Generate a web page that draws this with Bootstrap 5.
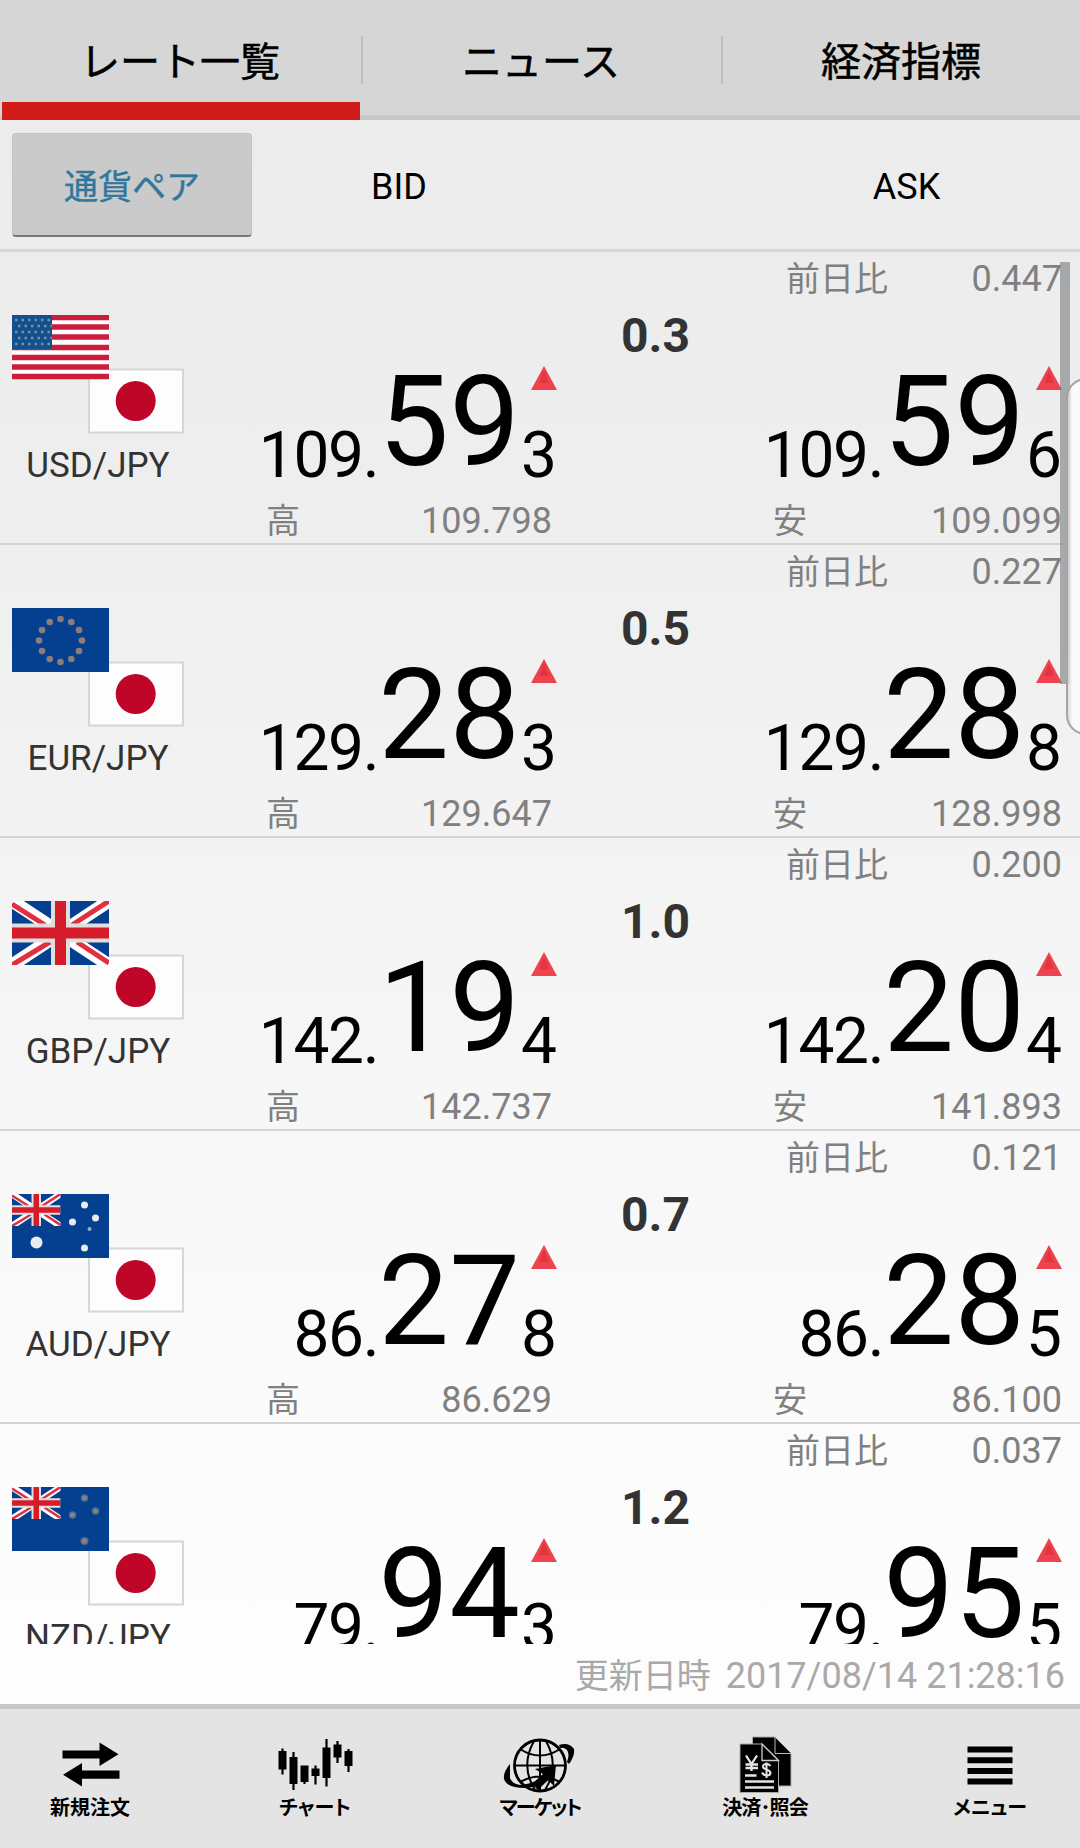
<!DOCTYPE html>
<html lang="ja">
<head>
<meta charset="utf-8">
<meta name="viewport" content="width=device-width, initial-scale=1">
<title>レート一覧</title>
<link rel="stylesheet" href="https://cdn.jsdelivr.net/npm/bootstrap@5.3.0/dist/css/bootstrap.min.css">
<style>
body{font-family:Roboto,"Noto Sans CJK JP",sans-serif;color:#000;width:1080px;height:1848px;overflow:hidden;background:linear-gradient(#ececec 120px,#eeeeee 480px,#f5f5f5 980px,#fcfcfc 1500px,#fdfdfd 1644px)}
.top-tabs{height:120px;background:#d6d6d6;border-bottom:5px solid #c8c8c8}
.top-tabs .nav-link{height:120px;padding:0;font-size:40px;line-height:126px;color:#000;text-align:center;position:relative;-webkit-text-stroke:.5px #000}
.top-tabs .nav-link.active::after{content:"";position:absolute;left:2px;right:0;top:102px;height:18px;background:#d21c1a}
.top-tabs .nav-item+.nav-item{padding-left:2px}
.top-tabs .nav-item+.nav-item::before{content:"";position:absolute;left:1px;top:36px;width:2px;height:48px;background:#bdbdbd}
.col-heads{height:132px;border-bottom:3px solid #d5d5d5;padding:13px 0 0 12px;font-size:36px;line-height:108px}
.pair-btn{width:240px;height:104px;padding:0;font-size:34px;line-height:106px;color:#32769a;background:#cacaca;border:1px solid #c2c2c2;border-bottom:2px solid #787878;border-radius:4px;-webkit-text-stroke:.4px #32769a}
.head-bid{width:294px}.head-ask{width:311px;margin-left:205px}
.rate-list{height:1392px;overflow:hidden}
.rate-row{height:293px;border-bottom:2px solid #d4d4d4}
.pair-col{width:249px;padding-top:63px}
.pair-col svg{margin-left:12px;display:block}
.pair-name{width:196px;font-size:35px;line-height:42px;margin-top:11px;color:#333}
.quote-col{width:308px}
.day-diff{height:105px;padding:6px 0 0 32px}
.sub-line{font-size:36px;line-height:42px;color:#808080}
.sub-line .jp{font-size:34px}
.price-line{height:128px}
.p-small{font-size:64px;line-height:66px;margin-bottom:-4px;letter-spacing:-1.3px}
.p-big{font-size:126px;line-height:128px;margin-bottom:-1px}
.p-last{width:37px;padding-top:9px}
.p-last .p-small{letter-spacing:0}
.high-low{margin-top:15px;padding:0 5px 0 17px}
.ask .high-low{padding:0 0 0 19px}
.spread{width:197px;padding-top:56px;font-size:48px;line-height:56px;font-weight:700;color:#333}
.updated{height:60px;padding:2px 15px 0 0;font-size:36px;line-height:58px;color:#a9a9a9;background:#fdfdfd}
.updated .jp{font-size:34px;margin-right:15px}
.updated span{position:relative;top:1px}
.bottom-bar{height:144px;border-top:5px solid #c8c8c8;background:#e4e4e4}
.bar-item{width:180px;padding-top:23px;color:#000}
.bar-item svg{display:block;margin:0 auto}
.bar-item span{font-family:"Noto Sans CJK JP",sans-serif;font-size:20px;line-height:26px;font-weight:700;display:block;white-space:nowrap;font-feature-settings:"palt"}
.bar-item .tight{letter-spacing:-1.9px}
.bar-item .snug{letter-spacing:-.9px}
.scroll-thumb{position:absolute;left:1060px;top:262px;width:10px;height:422px;background:rgba(120,122,124,.6)}
.edge-panel{position:absolute;left:1066px;top:378px;width:40px;height:357px;border:2px solid #a4a4a4;border-radius:22px;background:linear-gradient(90deg,rgba(225,225,225,.8) 0 2px,#fafafa 4px)}
</style>
<script src="https://cdn.jsdelivr.net/npm/bootstrap@5.3.0/dist/js/bootstrap.bundle.min.js"></script>
</head>
<body class="position-relative">
<svg width="0" height="0" class="position-absolute">
  <defs>
    <g id="jp"><rect x="77" y="54.500" width="94" height="63" fill="#fdfdfd" stroke="#d6d6d6" stroke-width="2"/><circle cx="123.7" cy="86" r="20" fill="#bf0628"/></g>
    <g id="jack">
      <rect width="97" height="64" fill="#04408f"/>
      <path d="M0 0 97 64M97 0 0 64" stroke="#fff" stroke-width="13"/>
      <path d="M0 3 33 24M97 0 60 24M0 64 38 41M97 62 65 41" stroke="#e03040" stroke-width="5"/>
      <path d="M48.500 0V64M0 32H97" stroke="#e2dede" stroke-width="19"/>
      <path d="M48.500 0V64M0 32H97" stroke="#d41c2a" stroke-width="11"/>
    </g>
    <symbol id="up" viewBox="0 0 26 24"><path d="M13 0 26 24H0z" fill="#ee434f"/><path d="M13 4 18 17H8z" fill="#e2363f"/></symbol>
    <clipPath id="flagbox"><rect width="97" height="64"/></clipPath>
  </defs>
</svg>

<ul class="nav top-tabs flex-nowrap">
  <li class="nav-item col-4 position-relative"><a class="nav-link active" href="#">レート一覧</a></li>
  <li class="nav-item col-4 position-relative"><a class="nav-link" href="#">ニュース</a></li>
  <li class="nav-item col-4 position-relative"><a class="nav-link" href="#">経済指標</a></li>
</ul>

<div class="col-heads d-flex">
  <button type="button" class="btn pair-btn">通貨ペア</button>
  <div class="head-bid text-center">BID</div>
  <div class="head-ask text-center">ASK</div>
</div>

<main class="rate-list">
  <div class="rate-row d-flex">
    <div class="pair-col">
      <svg width="173" height="119" viewBox="0 0 173 119"><use href="#jp"/>
        <rect width="97" height="64" fill="#fff"/>
        <path d="M0 2.500H97M0 12H97M0 22H97M0 32.500H97M0 42.500H97M0 52H97M0 61.500H97" stroke="#cb1e3c" stroke-width="5.400"/>
        <rect width="40" height="34" fill="#14508c"/>
        <path d="M3 5H40M6 11H40M3 17H40M6 23H40M3 29H40" stroke="#6f93a8" stroke-width="2.500" stroke-dasharray="2.500 4"/>
      </svg>
      <div class="pair-name text-center">USD/JPY</div>
    </div>
    <div class="quote-col bid">
      <div class="day-diff"></div>
      <div class="price-line d-flex justify-content-end align-items-end"><span class="p-small">109.</span><span class="p-big">59</span><div class="p-last d-flex flex-column justify-content-between align-items-end align-self-stretch"><svg width="26" height="24"><use href="#up"/></svg><span class="p-small">3</span></div></div>
      <div class="high-low sub-line d-flex justify-content-between align-items-baseline"><span class="jp">高</span><span>109.798</span></div>
    </div>
    <div class="spread text-center">0.3</div>
    <div class="quote-col ask">
      <div class="day-diff sub-line d-flex justify-content-between align-items-baseline"><span class="jp">前日比</span><span>0.447</span></div>
      <div class="price-line d-flex justify-content-end align-items-end"><span class="p-small">109.</span><span class="p-big">59</span><div class="p-last d-flex flex-column justify-content-between align-items-end align-self-stretch"><svg width="26" height="24"><use href="#up"/></svg><span class="p-small">6</span></div></div>
      <div class="high-low sub-line d-flex justify-content-between align-items-baseline"><span class="jp">安</span><span>109.099</span></div>
    </div>
  </div>

  <div class="rate-row d-flex">
    <div class="pair-col">
      <svg width="173" height="119" viewBox="0 0 173 119"><use href="#jp"/>
        <rect width="97" height="64" fill="#04408f"/>
        <g fill="#8d7c78"><circle cx="48.500" cy="11" r="3.300"/><circle cx="59.300" cy="14" r="3.300"/><circle cx="67" cy="22" r="3.300"/><circle cx="70" cy="32.500" r="3.300"/><circle cx="67" cy="43" r="3.300"/><circle cx="59.300" cy="51" r="3.300"/><circle cx="48.500" cy="54" r="3.300"/><circle cx="37.700" cy="51" r="3.300"/><circle cx="30" cy="43" r="3.300"/><circle cx="27" cy="32.500" r="3.300"/><circle cx="30" cy="22" r="3.300"/><circle cx="37.700" cy="14" r="3.300"/></g>
      </svg>
      <div class="pair-name text-center">EUR/JPY</div>
    </div>
    <div class="quote-col bid">
      <div class="day-diff"></div>
      <div class="price-line d-flex justify-content-end align-items-end"><span class="p-small">129.</span><span class="p-big">28</span><div class="p-last d-flex flex-column justify-content-between align-items-end align-self-stretch"><svg width="26" height="24"><use href="#up"/></svg><span class="p-small">3</span></div></div>
      <div class="high-low sub-line d-flex justify-content-between align-items-baseline"><span class="jp">高</span><span>129.647</span></div>
    </div>
    <div class="spread text-center">0.5</div>
    <div class="quote-col ask">
      <div class="day-diff sub-line d-flex justify-content-between align-items-baseline"><span class="jp">前日比</span><span>0.227</span></div>
      <div class="price-line d-flex justify-content-end align-items-end"><span class="p-small">129.</span><span class="p-big">28</span><div class="p-last d-flex flex-column justify-content-between align-items-end align-self-stretch"><svg width="26" height="24"><use href="#up"/></svg><span class="p-small">8</span></div></div>
      <div class="high-low sub-line d-flex justify-content-between align-items-baseline"><span class="jp">安</span><span>128.998</span></div>
    </div>
  </div>

  <div class="rate-row d-flex">
    <div class="pair-col">
      <svg width="173" height="119" viewBox="0 0 173 119"><use href="#jp"/><use href="#jack" clip-path="url(#flagbox)"/></svg>
      <div class="pair-name text-center">GBP/JPY</div>
    </div>
    <div class="quote-col bid">
      <div class="day-diff"></div>
      <div class="price-line d-flex justify-content-end align-items-end"><span class="p-small">142.</span><span class="p-big">19</span><div class="p-last d-flex flex-column justify-content-between align-items-end align-self-stretch"><svg width="26" height="24"><use href="#up"/></svg><span class="p-small">4</span></div></div>
      <div class="high-low sub-line d-flex justify-content-between align-items-baseline"><span class="jp">高</span><span>142.737</span></div>
    </div>
    <div class="spread text-center">1.0</div>
    <div class="quote-col ask">
      <div class="day-diff sub-line d-flex justify-content-between align-items-baseline"><span class="jp">前日比</span><span>0.200</span></div>
      <div class="price-line d-flex justify-content-end align-items-end"><span class="p-small">142.</span><span class="p-big">20</span><div class="p-last d-flex flex-column justify-content-between align-items-end align-self-stretch"><svg width="26" height="24"><use href="#up"/></svg><span class="p-small">4</span></div></div>
      <div class="high-low sub-line d-flex justify-content-between align-items-baseline"><span class="jp">安</span><span>141.893</span></div>
    </div>
  </div>

  <div class="rate-row d-flex">
    <div class="pair-col">
      <svg width="173" height="119" viewBox="0 0 173 119"><use href="#jp"/>
        <rect width="97" height="64" fill="#04408f"/>
        <g transform="scale(.5)"><use href="#jack" clip-path="url(#flagbox)"/></g>
        <g fill="#e6ecef"><circle cx="24.500" cy="48.500" r="6"/><circle cx="72.500" cy="11" r="3.500"/><circle cx="83.500" cy="24" r="3.500"/><circle cx="60.500" cy="28" r="3.500"/><circle cx="77.500" cy="35" r="2" fill="#8fb0bf"/><circle cx="72.500" cy="54" r="3.500"/></g>
      </svg>
      <div class="pair-name text-center">AUD/JPY</div>
    </div>
    <div class="quote-col bid">
      <div class="day-diff"></div>
      <div class="price-line d-flex justify-content-end align-items-end"><span class="p-small">86.</span><span class="p-big">27</span><div class="p-last d-flex flex-column justify-content-between align-items-end align-self-stretch"><svg width="26" height="24"><use href="#up"/></svg><span class="p-small">8</span></div></div>
      <div class="high-low sub-line d-flex justify-content-between align-items-baseline"><span class="jp">高</span><span>86.629</span></div>
    </div>
    <div class="spread text-center">0.7</div>
    <div class="quote-col ask">
      <div class="day-diff sub-line d-flex justify-content-between align-items-baseline"><span class="jp">前日比</span><span>0.121</span></div>
      <div class="price-line d-flex justify-content-end align-items-end"><span class="p-small">86.</span><span class="p-big">28</span><div class="p-last d-flex flex-column justify-content-between align-items-end align-self-stretch"><svg width="26" height="24"><use href="#up"/></svg><span class="p-small">5</span></div></div>
      <div class="high-low sub-line d-flex justify-content-between align-items-baseline"><span class="jp">安</span><span>86.100</span></div>
    </div>
  </div>

  <div class="rate-row d-flex">
    <div class="pair-col">
      <svg width="173" height="119" viewBox="0 0 173 119"><use href="#jp"/>
        <rect width="97" height="64" fill="#04408f"/>
        <g transform="scale(.5)"><use href="#jack" clip-path="url(#flagbox)"/></g>
        <g fill="#a4777c" stroke="#3f7590" stroke-width="1.500"><circle cx="72.500" cy="11" r="3"/><circle cx="83.500" cy="24" r="3"/><circle cx="60.500" cy="28" r="3"/><circle cx="72.500" cy="54" r="3.300"/></g>
      </svg>
      <div class="pair-name text-center">NZD/JPY</div>
    </div>
    <div class="quote-col bid">
      <div class="day-diff"></div>
      <div class="price-line d-flex justify-content-end align-items-end"><span class="p-small">79.</span><span class="p-big">94</span><div class="p-last d-flex flex-column justify-content-between align-items-end align-self-stretch"><svg width="26" height="24"><use href="#up"/></svg><span class="p-small">3</span></div></div>
    </div>
    <div class="spread text-center">1.2</div>
    <div class="quote-col ask">
      <div class="day-diff sub-line d-flex justify-content-between align-items-baseline"><span class="jp">前日比</span><span>0.037</span></div>
      <div class="price-line d-flex justify-content-end align-items-end"><span class="p-small">79.</span><span class="p-big">95</span><div class="p-last d-flex flex-column justify-content-between align-items-end align-self-stretch"><svg width="26" height="24"><use href="#up"/></svg><span class="p-small">5</span></div></div>
    </div>
  </div>
</main>

<div class="updated d-flex justify-content-end align-items-baseline"><span class="jp">更新日時</span><span>2017/08/14 21:28:16</span></div>

<footer class="bottom-bar d-flex justify-content-between text-center">
  <div class="bar-item"><svg width="80" height="62" viewBox="0 0 80 62"><path d="M12.500 18.500H49.500V10.500L68.500 22.300 49.500 34V26.500H12.500zM69.500 38.500H32V31L13 42.700 32 54.500V46.700H69.500z"/></svg><span>新規注文</span></div>
  <div class="bar-item"><svg width="80" height="62" viewBox="0 0 80 62"><path d="M3.500 19h8v18.500h-8zM14.500 25h8v27h-8zM25.500 33.500h8v16.500h-8zM36.500 36.500h8v7.500h-8zM47.500 15.500h8v30.500h-8zM58.500 12.500h8v13h-8zM69.500 19h8v15h-8z"/><path d="M7.500 16.500v26M18.500 20v38M29.500 34v18M40.500 33.500v19M51.500 7v47.500M62.500 9v22M73.500 17v23" stroke="#000" stroke-width="2.200"/></svg><span>チャート</span></div>
  <div class="bar-item"><svg width="80" height="62" viewBox="0 0 80 62"><g fill="none" stroke="#000"><circle cx="40" cy="33.500" r="25.500" stroke-width="2.800"/><path d="M40 8V59M14.500 33.500H65.500M20 17Q40 30 60 17M20 50Q40 39 60 50M34 9Q20 34 35 58M46 9Q60 34 45 58" stroke-width="2"/></g><path d="M10 32Q3 40 4 47Q7 56 25 56Q45 54 55 42L48 40Q36 52 20 53Q9 51 10 43zM59 13Q69 10 74 17Q75 24 69 32L67 30Q70 22 67 18Q64 15 60 16z"/><path d="M56 33 54 54 48 48 38 58 32 52 43 42 35 37z"/></svg><span class="tight">マーケット</span></div>
  <div class="bar-item"><svg width="80" height="62" viewBox="0 0 80 62"><path d="M27.500 5H50L66 21V54H27.500z" stroke="#aaa" stroke-width="1"/><path d="M50 5V21.500H66" fill="none" stroke="#bbb"/><path d="M15 12H37L53.500 28V60.500H15z" stroke="#aaa"/><path d="M37 12V28.500H53.500z" fill="#000" stroke="#ccc" stroke-width="1.300"/><path d="M21 23.500 26.500 32 32 23.500M26.500 32V39M20.500 32.500H33M20.500 36H33M20 43.500H31.500M20 49.500H49M20 55.500H49" fill="none" stroke="#e4e4e4" stroke-width="2.300"/><path d="M45.500 34C43 30.500 37.500 32 38 35C38.500 38 45.500 37 45.500 41C45 44.500 38.500 44 37 40.500M41.500 30.500V46" fill="none" stroke="#e4e4e4" stroke-width="2"/></svg><span class="snug">決済･照会</span></div>
  <div class="bar-item"><svg width="80" height="62" viewBox="0 0 80 62"><path d="M17.500 17.500h45M17.500 28.200h45M17.500 38.900h45M17.500 49.500h45" stroke="#000" stroke-width="6"/></svg><span>メニュー</span></div>
</footer>

<div class="scroll-thumb"></div>
<div class="edge-panel"></div>
</body>
</html>
